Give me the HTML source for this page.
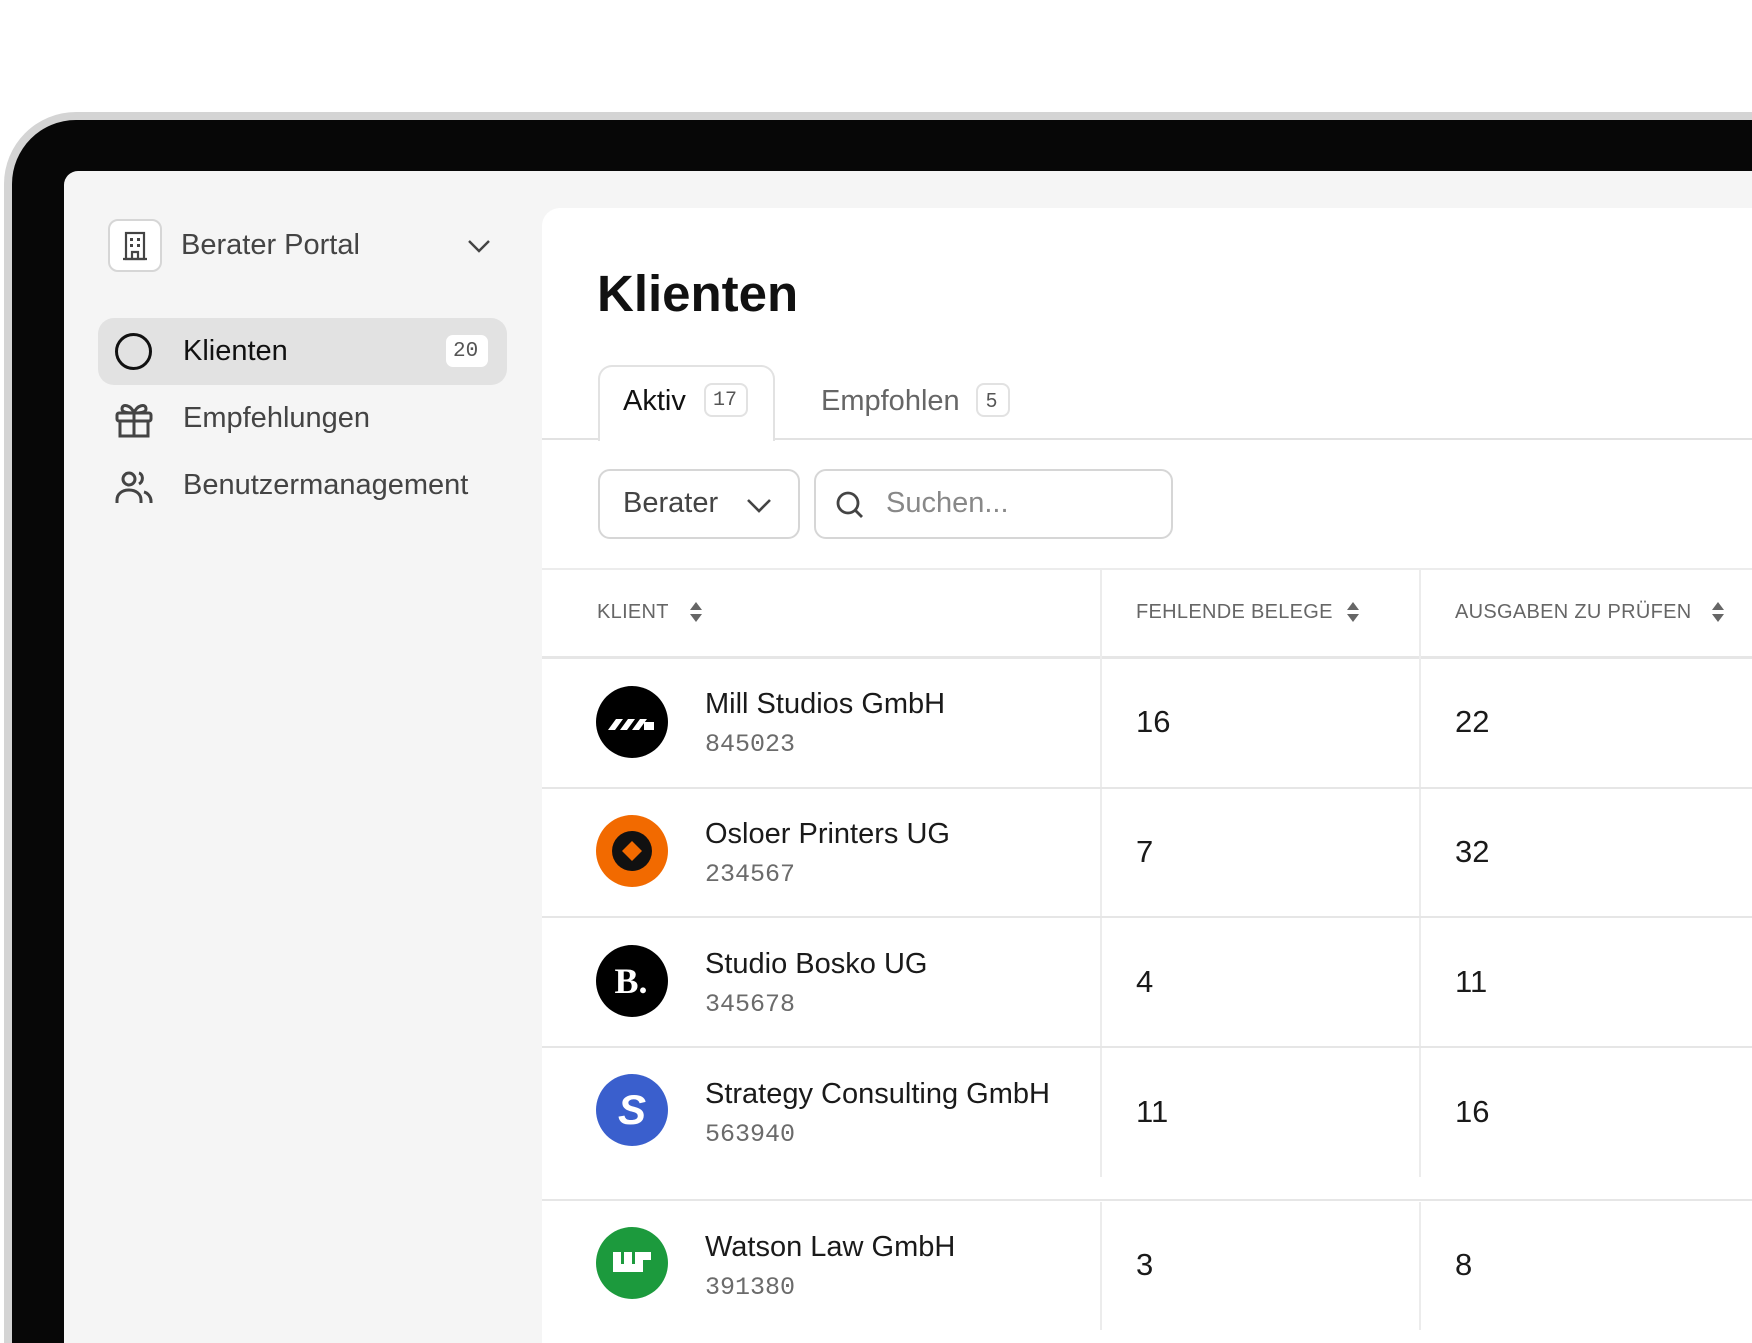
<!DOCTYPE html>
<html style="width:1752px;height:1343px;overflow:hidden"><head><meta charset="utf-8"><style>
*{margin:0;padding:0;box-sizing:border-box}
body{width:1752px;height:1343px;overflow:hidden;background:#fff;font-family:"Liberation Sans",sans-serif;position:relative}
.abs{position:absolute}
.bezel{left:4px;top:112px;width:1748px;height:1231px;background:#d4d4d4;border-radius:72px 0 0 0}
.black{left:12px;top:120px;width:1740px;height:1223px;background:#070707;border-radius:64px 0 0 0}
.screen{left:64px;top:171px;width:1688px;height:1172px;background:#f5f5f5;border-radius:14px 0 0 0}
.panel{left:542px;top:208px;width:1210px;height:1135px;background:#fff;border-radius:18px 0 0 0}
.wrap{position:absolute;left:0;top:0;width:1752px;height:1343px;overflow:hidden}
.t{position:absolute;white-space:nowrap;line-height:1}
.line{position:absolute;background:#e6e6e6}
.name{font-size:29px;color:#1a1a1a}
.id{font-family:"Liberation Mono",monospace;font-size:25px;color:#6b6b6b}
.num{font-size:31px;color:#1a1a1a}
.hd{font-size:20px;color:#666;letter-spacing:.3px}
</style></head><body><div class="wrap">
<div class="abs bezel"></div>
<div class="abs black"></div>
<div class="abs screen"></div>
<div class="abs" style="left:108px;top:219px;width:54px;height:53px;border:2px solid #d6d6d6;border-radius:10px;background:#fff"></div>
<svg class="abs" style="left:121px;top:231px" width="28" height="30" viewBox="0 0 28 30" fill="none" stroke="#444" stroke-width="2.2"><rect x="5" y="2" width="18" height="26"/><path d="M2 28h24M11 28v-7h6v7"/><g fill="#444" stroke="none"><rect x="9" y="7" width="3" height="3"/><rect x="16" y="7" width="3" height="3"/><rect x="9" y="13" width="3" height="3"/><rect x="16" y="13" width="3" height="3"/></g></svg>
<div class="t" style="left:181px;top:231px;font-size:29px;color:#444">Berater Portal</div>
<svg class="abs" style="left:467px;top:238px" width="24" height="16" viewBox="0 0 24 16"><path d="M2 3l10 10 10-10" fill="none" stroke="#444" stroke-width="2.4"/></svg>
<div class="abs" style="left:98px;top:318px;width:409px;height:67px;background:#e2e2e2;border-radius:16px"></div>
<div class="abs" style="left:115px;top:333px;width:37px;height:37px;border:3.5px solid #111;border-radius:50%"></div>
<div class="t" style="left:183px;top:337px;font-size:29px;color:#111">Klienten</div>
<div class="abs" style="left:446px;top:335px;width:42px;height:32px;background:#fff;border-radius:7px"></div>
<div class="t" style="left:453px;top:341px;font-family:'Liberation Mono',monospace;font-size:21px;color:#555">20</div>
<svg class="abs" style="left:114px;top:400px" width="40" height="40" viewBox="0 0 40 40" fill="none" stroke="#444" stroke-width="3"><rect x="3" y="13" width="34" height="8" rx="2"/><path d="M6 21v15h28V21M20 13v23M20 13c-3-8-12-10-12-4 0 4 8 4 12 4M20 13c3-8 12-10 12-4 0 4-8 4-12 4"/></svg>
<div class="t" style="left:183px;top:404px;font-size:29px;color:#444">Empfehlungen</div>
<svg class="abs" style="left:114px;top:468px" width="40" height="40" viewBox="0 0 40 40" fill="none" stroke="#444" stroke-width="3"><circle cx="15" cy="11" r="6"/><path d="M3 35v-3c0-6 5-10 12-10s12 4 12 10v3M25 5c4 1 5 8 0 11M30 24c4 1 7 5 7 9v2"/></svg>
<div class="t" style="left:183px;top:471px;font-size:29px;color:#444">Benutzermanagement</div>
<div class="abs panel"></div>
<div class="t" style="left:597px;top:268px;font-size:51px;font-weight:bold;color:#111">Klienten</div>
<div class="line" style="left:542px;top:438px;width:1210px;height:2px;background:#e2e2e2"></div>
<div class="abs" style="left:598px;top:365px;width:177px;height:76px;background:#fff;border:2px solid #e2e2e2;border-bottom:none;border-radius:14px 14px 0 0"></div>
<div class="t" style="left:623px;top:387px;font-size:29px;color:#111">Aktiv</div>
<div class="abs" style="left:704px;top:383px;width:44px;height:34px;border:2px solid #e2e2e2;border-radius:8px"></div>
<div class="t" style="left:713px;top:391px;font-family:'Liberation Mono',monospace;font-size:20px;color:#555">17</div>
<div class="t" style="left:821px;top:387px;font-size:29px;color:#666">Empfohlen</div>
<div class="abs" style="left:976px;top:383px;width:34px;height:34px;border:2px solid #e2e2e2;border-radius:8px"></div>
<div class="t" style="left:986px;top:391px;font-size:20px;color:#555">5</div>
<div class="abs" style="left:598px;top:469px;width:202px;height:70px;border:2px solid #d6d6d6;border-radius:12px"></div>
<div class="t" style="left:623px;top:489px;font-size:29px;color:#444">Berater</div>
<svg class="abs" style="left:746px;top:497px" width="26" height="16" viewBox="0 0 26 16"><path d="M2 3l11 11 11-11" fill="none" stroke="#444" stroke-width="2.6"/></svg>
<div class="abs" style="left:814px;top:469px;width:359px;height:70px;border:2px solid #d6d6d6;border-radius:12px"></div>
<svg class="abs" style="left:834px;top:489px" width="32" height="32" viewBox="0 0 32 32" fill="none" stroke="#444" stroke-width="2.8"><circle cx="14" cy="14" r="10"/><path d="M21 21l7 7"/></svg>
<div class="t" style="left:886px;top:489px;font-size:29px;color:#888">Suchen...</div>
<div class="line" style="left:542px;top:568px;width:1210px;height:2px;background:#ececec"></div>
<div class="line" style="left:542px;top:656px;width:1210px;height:3px;background:#e6e6e6"></div>
<div class="line" style="left:1100px;top:569px;width:2px;height:608px;background:#ececec"></div>
<div class="line" style="left:1419px;top:569px;width:2px;height:608px;background:#ececec"></div>
<div class="line" style="left:1100px;top:1202px;width:2px;height:128px;background:#ececec"></div>
<div class="line" style="left:1419px;top:1202px;width:2px;height:128px;background:#ececec"></div>
<div class="t hd" style="left:597px;top:602px">KLIENT</div>
<div class="t hd" style="left:1136px;top:602px">FEHLENDE BELEGE</div>
<div class="t hd" style="left:1455px;top:602px">AUSGABEN ZU PRÜFEN</div>
<svg class="abs" style="left:689px;top:601px" width="14" height="22" viewBox="0 0 14 22" fill="#666"><path d="M7 1l6 8H1zM7 21l6-8H1z"/></svg>
<svg class="abs" style="left:1346px;top:601px" width="14" height="22" viewBox="0 0 14 22" fill="#666"><path d="M7 1l6 8H1zM7 21l6-8H1z"/></svg>
<svg class="abs" style="left:1711px;top:601px" width="14" height="22" viewBox="0 0 14 22" fill="#666"><path d="M7 1l6 8H1zM7 21l6-8H1z"/></svg>
<div class="line" style="left:542px;top:787px;width:1210px;height:2px"></div>
<div class="line" style="left:542px;top:916px;width:1210px;height:2px"></div>
<div class="line" style="left:542px;top:1046px;width:1210px;height:2px"></div>
<div class="line" style="left:542px;top:1199px;width:1210px;height:2px"></div>
<svg class="abs" style="left:596px;top:686px" width="72" height="72" viewBox="0 0 72 72"><circle cx="36" cy="36" r="36" fill="#000"/><path d="M12 44l8-11h7l-8 11zM24 44l8-11h7l-8 11zM36 44l8-11h7l-8 11zM48 44v-8h10v8z" fill="#fff"/></svg>
<svg class="abs" style="left:596px;top:815px" width="72" height="72" viewBox="0 0 72 72"><circle cx="36" cy="36" r="36" fill="#f26a00"/><circle cx="36" cy="36" r="20" fill="#111"/><path d="M36 26l10 10-10 10-10-10z" fill="#f26a00"/></svg>
<svg class="abs" style="left:596px;top:945px" width="72" height="72" viewBox="0 0 72 72"><circle cx="36" cy="36" r="36" fill="#000"/><text x="35" y="48" text-anchor="middle" font-family="Liberation Serif,serif" font-weight="bold" font-size="36" fill="#fff">B.</text></svg>
<svg class="abs" style="left:596px;top:1074px" width="72" height="72" viewBox="0 0 72 72"><circle cx="36" cy="36" r="36" fill="#3a5fcd"/><text x="36" y="50" text-anchor="middle" font-family="Liberation Sans,sans-serif" font-weight="bold" font-style="italic" font-size="42" fill="#fff">S</text></svg>
<svg class="abs" style="left:596px;top:1227px" width="72" height="72" viewBox="0 0 72 72"><circle cx="36" cy="36" r="36" fill="#1c9a3d"/><path d="M17 25h8v12h3V25h8v12h3V25h8v20H17z" fill="#fff"/><path d="M47 25h8v8h-8z" fill="#fff"/></svg>
<div class="t name" style="left:705px;top:690px">Mill Studios GmbH</div>
<div class="t id" style="left:705px;top:732px">845023</div>
<div class="t num" style="left:1136px;top:706px">16</div><div class="t num" style="left:1455px;top:706px">22</div>
<div class="t name" style="left:705px;top:820px">Osloer Printers UG</div>
<div class="t id" style="left:705px;top:862px">234567</div>
<div class="t num" style="left:1136px;top:836px">7</div><div class="t num" style="left:1455px;top:836px">32</div>
<div class="t name" style="left:705px;top:950px">Studio Bosko UG</div>
<div class="t id" style="left:705px;top:992px">345678</div>
<div class="t num" style="left:1136px;top:966px">4</div><div class="t num" style="left:1455px;top:966px">11</div>
<div class="t name" style="left:705px;top:1080px">Strategy Consulting GmbH</div>
<div class="t id" style="left:705px;top:1122px">563940</div>
<div class="t num" style="left:1136px;top:1096px">11</div><div class="t num" style="left:1455px;top:1096px">16</div>
<div class="t name" style="left:705px;top:1233px">Watson Law GmbH</div>
<div class="t id" style="left:705px;top:1275px">391380</div>
<div class="t num" style="left:1136px;top:1249px">3</div><div class="t num" style="left:1455px;top:1249px">8</div>
</div></body></html>
